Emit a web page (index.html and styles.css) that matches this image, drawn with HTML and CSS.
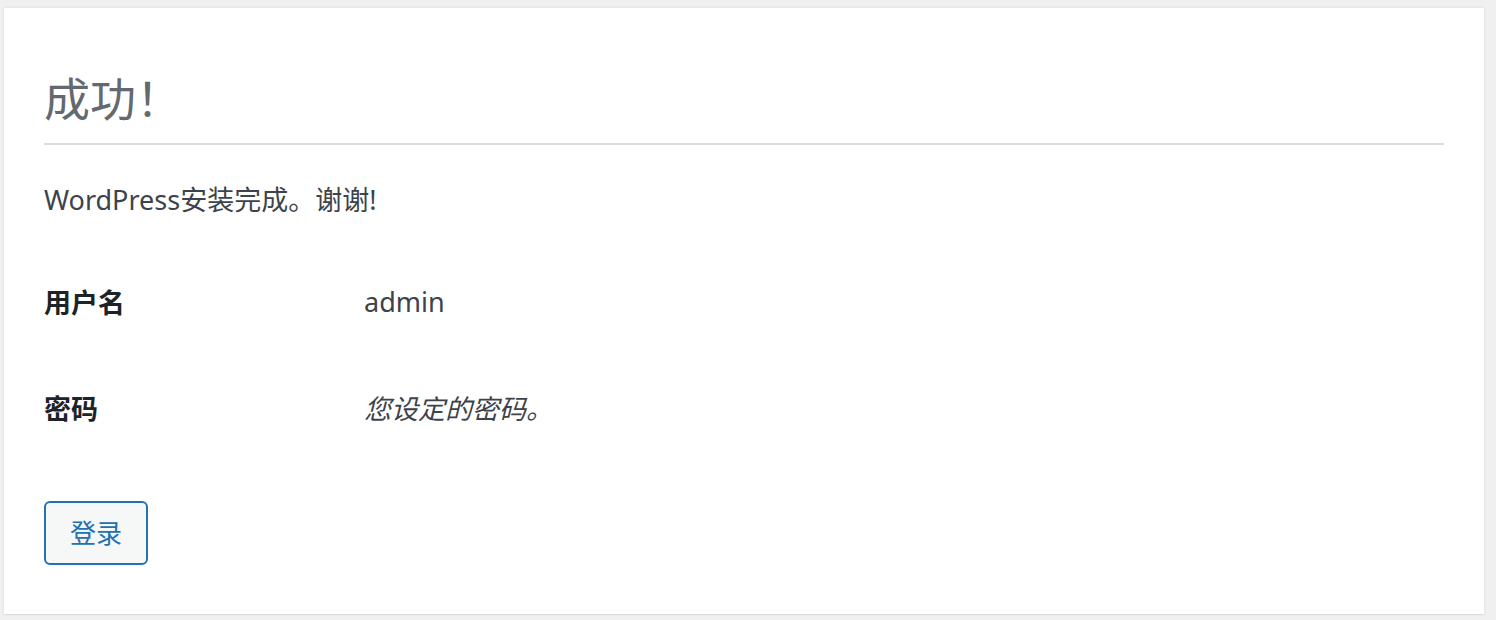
FILE: index.html
```html
<!DOCTYPE html>
<html lang="zh-CN">
<head>
<meta charset="utf-8">
<title>WordPress › 安装</title>
<link rel="stylesheet" href="styles.css">
</head>
<body>
<main class="card">
  <h1 class="title">成功！</h1>
  <p class="lead">WordPress安装完成。谢谢!</p>
  <div class="form-table">
    <div class="row">
      <div class="th">用户名</div>
      <div class="td">admin</div>
    </div>
    <div class="row">
      <div class="th">密码</div>
      <div class="td"><em class="hint">您设定的密码。</em></div>
    </div>
  </div>
  <div class="step">
    <a class="button" href="#">登录</a>
  </div>
</main>
</body>
</html>
```

FILE: styles.css
```css
html, body {
  margin: 0;
  padding: 0;
  background: #f0f0f1;
}
body {
  padding: 8px 12px 6px 4px;
  font-family: "Noto Sans", "Noto Sans CJK SC", sans-serif;
  color: #3c434a;
}
.card {
  box-sizing: border-box;
  width: 1480px;
  height: 606px;
  background: #fff;
  padding: 40px 40px 0 40px;
  box-shadow: 0 0 3px rgba(0,0,0,0.10), 0 1px 1px rgba(0,0,0,0.04);
}
.title {
  margin: 22px 0 0 0;
  padding: 0 0 17px 0;
  font-size: 46px;
  line-height: 56px;
  font-weight: 400;
  color: #646970;
  border-bottom: 2px solid #dcdcde;
}
.lead {
  margin: 34px 0 0 0;
  font-size: 27px;
  line-height: 42px;
}
.form-table {
  margin-top: 27px;
  display: flex;
  flex-direction: column;
}
.row {
  display: flex;
  align-items: center;
  height: 106px;
}
.th {
  width: 320px;
  flex: none;
  font-weight: 700;
  font-size: 27px;
  color: #1d2327;
}
.td {
  font-size: 27px;
  color: #3c434a;
}
.hint {
  font-style: italic;
}
.step {
  margin-top: 41px;
  display: flex;
}
.button {
  box-sizing: border-box;
  display: inline-flex;
  align-items: center;
  justify-content: center;
  height: 64px;
  padding: 0 24px 3px 24px;
  border: 2px solid #2271b1;
  border-radius: 6px;
  background: #f6f7f7;
  color: #2271b1;
  font-size: 26px;
  text-decoration: none;
}
```
